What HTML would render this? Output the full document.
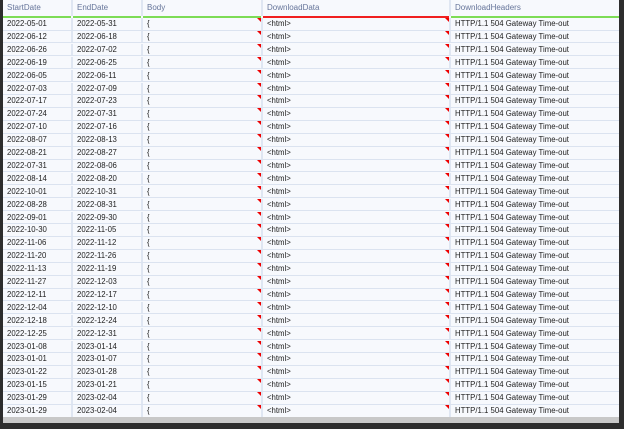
<!DOCTYPE html><html><head><style>
body{margin:0;width:624px;height:429px;background:#2d2d2d;overflow:hidden;font-family:"Liberation Sans",sans-serif;}
#g{position:absolute;left:3px;top:0;width:616px;height:417px;background:#f7f9fd;}
.h{position:absolute;top:0;height:16px;font-size:8px;color:#66759a;line-height:16px;padding-left:4px;box-sizing:border-box;border-right:2px solid #dfe6f2;background:#f7f9fd}
.h:after{content:"";position:absolute;left:0;right:0;bottom:-2px;height:2px;background:#7ddc56}
.h.r:after{background:#f02020}
.row{position:absolute;left:0;width:616px;height:12.5px;border-bottom:1px solid #dbe3f0;box-sizing:border-box;}
.c{position:absolute;top:0;height:100%;font-size:7.8px;color:#222;line-height:12px;padding-left:4px;box-sizing:border-box;border-right:2px solid #dfe6f2;white-space:nowrap}
.t:after{content:"";position:absolute;right:0;top:0;border-top:4px solid #e00;border-left:4px solid transparent}
#sb{position:absolute;left:3px;top:417px;width:616px;height:6px;background:#c8c8c8}
</style></head><body>
<div id="g">
<div class="h" style="left:0;width:70px">StartDate</div>
<div class="h" style="left:70px;width:70px">EndDate</div>
<div class="h" style="left:140px;width:120px">Body</div>
<div class="h r" style="left:260px;width:188px">DownloadData</div>
<div class="h" style="left:448px;width:168px;border-right:none">DownloadHeaders</div>
<div id="rows"></div>
</div>
<div id="sb"></div>
<script>
var d=[["2022-05-01","2022-05-31"],["2022-06-12","2022-06-18"],["2022-06-26","2022-07-02"],["2022-06-19","2022-06-25"],["2022-06-05","2022-06-11"],["2022-07-03","2022-07-09"],["2022-07-17","2022-07-23"],["2022-07-24","2022-07-31"],["2022-07-10","2022-07-16"],["2022-08-07","2022-08-13"],["2022-08-21","2022-08-27"],["2022-07-31","2022-08-06"],["2022-08-14","2022-08-20"],["2022-10-01","2022-10-31"],["2022-08-28","2022-08-31"],["2022-09-01","2022-09-30"],["2022-10-30","2022-11-05"],["2022-11-06","2022-11-12"],["2022-11-20","2022-11-26"],["2022-11-13","2022-11-19"],["2022-11-27","2022-12-03"],["2022-12-11","2022-12-17"],["2022-12-04","2022-12-10"],["2022-12-18","2022-12-24"],["2022-12-25","2022-12-31"],["2023-01-08","2023-01-14"],["2023-01-01","2023-01-07"],["2023-01-22","2023-01-28"],["2023-01-15","2023-01-21"],["2023-01-29","2023-02-04"],["2023-01-29","2023-02-04"]];
var h="";for(var i=0;i<d.length;i++){h+='<div class="row" style="top:'+(18+i*12.9)+'px"><div class="c" style="left:0;width:70px">'+d[i][0]+'</div><div class="c" style="left:70px;width:70px">'+d[i][1]+'</div><div class="c t" style="left:140px;width:120px">{</div><div class="c t" style="left:260px;width:188px">&lt;html&gt;</div><div class="c" style="left:448px;width:168px;border-right:none">HTTP/1.1 504 Gateway Time-out</div></div>';}
document.getElementById("rows").innerHTML=h;
</script>
</body></html>
